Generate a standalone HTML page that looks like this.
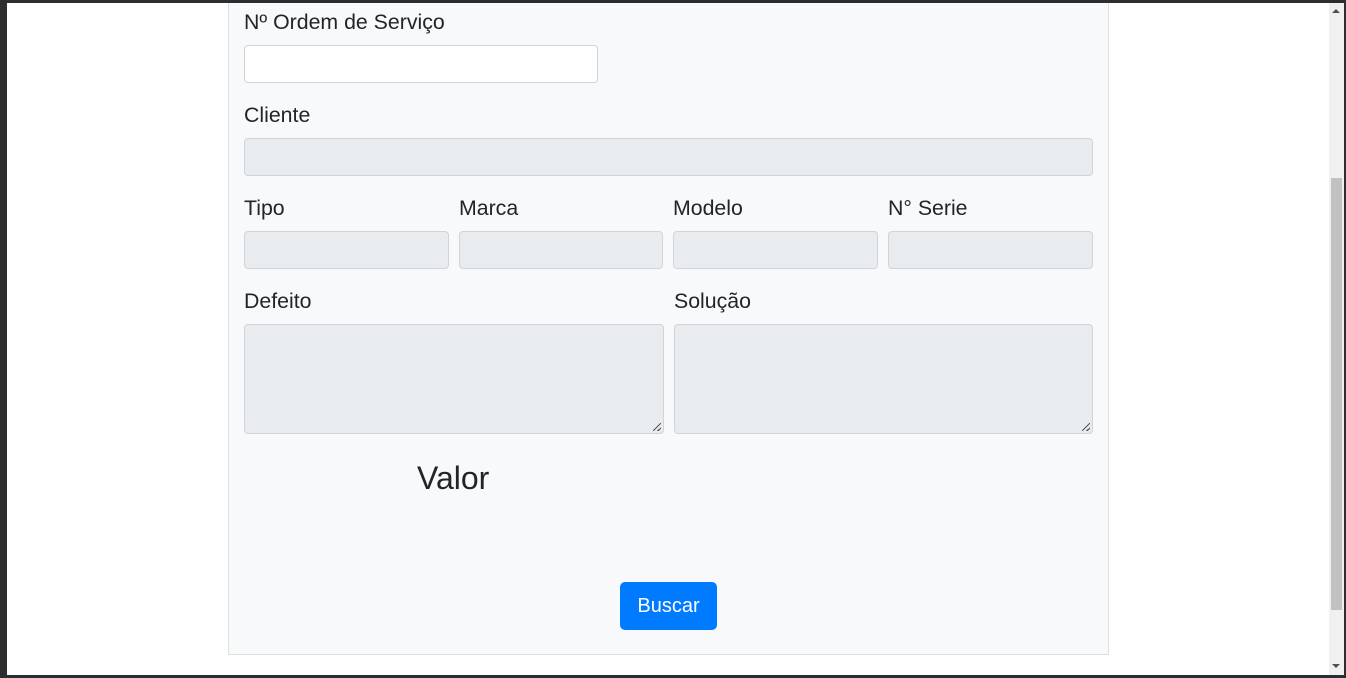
<!DOCTYPE html>
<html><head><meta charset="utf-8"><style>
*{box-sizing:border-box;margin:0;padding:0}
body{width:1346px;height:678px;overflow:hidden;background:#2b2d2e;position:relative;font-family:"Liberation Sans",sans-serif;color:#212529}
.vp{position:absolute;left:7px;top:3px;width:1322px;height:672px;background:#fff;overflow:hidden}
.sb{position:absolute;left:1329px;top:3px;width:15px;height:672px;background:#f0f0f0}
.th{position:absolute;left:2px;top:175px;width:11px;height:432px;background:#c1c1c1}
.card{position:absolute;left:221px;top:-20px;width:881px;height:672px;background:#f8f9fa;border:1px solid #dfdfdf}
.a{position:absolute}
.l{position:absolute;font-size:21.3px;line-height:24px}
.i{position:absolute;height:38px;border:1px solid #ced4da;border-radius:4px;background:#e9ecef}
.w{background:#fff}
.g{position:absolute;right:2px;bottom:2px;width:8px;height:8px;background:linear-gradient(135deg,transparent 45%,#555 45%,#555 55%,transparent 55%,transparent 75%,#555 75%,#555 85%,transparent 85%)}
.btn{position:absolute;left:613px;top:579px;width:97px;height:48px;background:#007bff;border-radius:5px;color:#fff;font-size:20px;text-align:center;line-height:48px}
</style></head><body>
<div class="vp">
<div class="card"></div>
<div class="l" style="left:237px;top:7px">Nº Ordem de Serviço</div>
<div class="i w" style="left:237px;top:42px;width:354px"></div>
<div class="l" style="left:237px;top:100px">Cliente</div>
<div class="i" style="left:237px;top:135px;width:849px"></div>
<div class="l" style="left:237px;top:193px">Tipo</div>
<div class="l" style="left:452px;top:193px">Marca</div>
<div class="l" style="left:666px;top:193px">Modelo</div>
<div class="l" style="left:881px;top:193px">N° Serie</div>
<div class="i" style="left:237px;top:228px;width:205px"></div>
<div class="i" style="left:452px;top:228px;width:204px"></div>
<div class="i" style="left:666px;top:228px;width:205px"></div>
<div class="i" style="left:881px;top:228px;width:205px"></div>
<div class="l" style="left:237px;top:286px">Defeito</div>
<div class="l" style="left:667px;top:286px">Solução</div>
<div class="i" style="left:237px;top:321px;width:420px;height:110px"><div class="g"></div></div>
<div class="i" style="left:667px;top:321px;width:419px;height:110px"><div class="g"></div></div>
<div class="l" style="left:410px;top:456px;font-size:32px;line-height:38px">Valor</div>
<div class="btn">Buscar</div>
</div>
<div class="sb"><div class="th"></div>
<div class="a" style="left:3px;top:6px;border-left:4px solid transparent;border-right:4px solid transparent;border-bottom:4px solid #505050"></div>
<div class="a" style="left:3px;top:661px;border-left:4px solid transparent;border-right:4px solid transparent;border-top:4px solid #505050"></div>
</div>
</body></html>
